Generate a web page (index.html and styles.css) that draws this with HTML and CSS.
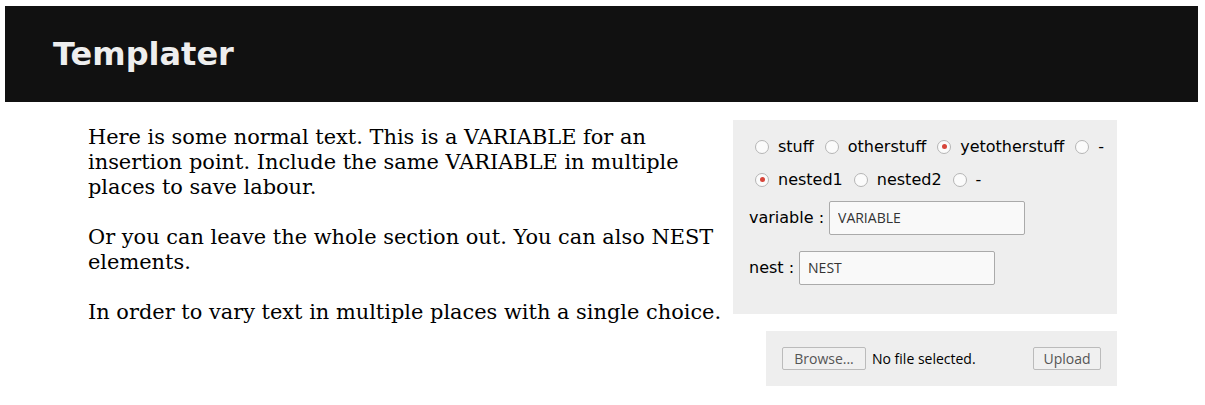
FILE: index.html
```html
<!DOCTYPE html>
<html>
<head>
<meta charset="utf-8">
<link rel="stylesheet" href="styles.css">
</head>
<body>
<header class="topbar"><h1 class="title">Templater</h1></header>
<main class="content">
  <section class="doc">
    <p>Here is some normal text. This is a VARIABLE for an insertion point. Include the same VARIABLE in multiple places to save labour.</p>
    <p>Or you can leave the whole section out. You can also NEST elements.</p>
    <p>In order to vary text in multiple places with a single choice.</p>
  </section>
  <aside class="side">
    <form class="panel">
      <div class="radio-row">
        <label class="opt"><input type="radio" name="a" class="radio"><span>stuff</span></label>
        <label class="opt"><input type="radio" name="a" class="radio"><span>otherstuff</span></label>
        <label class="opt"><input type="radio" name="a" class="radio" checked><span>yetotherstuff</span></label>
        <label class="opt"><input type="radio" name="a" class="radio"><span>-</span></label>
      </div>
      <div class="radio-row">
        <label class="opt"><input type="radio" name="b" class="radio" checked><span>nested1</span></label>
        <label class="opt"><input type="radio" name="b" class="radio"><span>nested2</span></label>
        <label class="opt"><input type="radio" name="b" class="radio"><span>-</span></label>
      </div>
      <div class="field field-first"><span class="field-label">variable :</span><input class="text-input" type="text" value="VARIABLE"></div>
      <div class="field field-second"><span class="field-label">nest :</span><input class="text-input" type="text" value="NEST"></div>
    </form>
    <div class="upload">
      <div class="file-pick"><button class="btn btn-browse" type="button">Browse...</button><span class="file-name">No file selected.</span></div>
      <button class="btn btn-upload" type="button">Upload</button>
    </div>
  </aside>
</main>
</body>
</html>
```

FILE: styles.css
```css
html, body {
  margin: 0;
  padding: 0;
  background: #fff;
}
body {
  font-family: "DejaVu Serif", serif;
}
.topbar {
  margin: 6px 7px 0 5px;
  height: 96px;
  background: #111;
  display: flex;
  align-items: center;
  padding-left: 48px;
  box-sizing: border-box;
}
.title {
  margin: 0;
  font-family: "DejaVu Sans", sans-serif;
  font-weight: bold;
  font-size: 32px;
  color: #eee;
}
.content {
  margin: 0 88px;
  padding-top: 18px;
  display: flex;
  justify-content: space-between;
}
.doc {
  flex: 1;
  padding-top: 5px;
}
.doc p {
  margin: 0 0 25px;
  font-size: 20.9px;
  line-height: 25px;
  color: #000;
  max-width: 640px;
}
.side {
  width: 384px;
  display: flex;
  flex-direction: column;
  align-items: flex-end;
}
.panel {
  width: 384px;
  height: 194px;
  box-sizing: border-box;
  background: #eee;
  padding: 10px 16px 0;
  margin: 0;
  font-family: "DejaVu Sans", sans-serif;
  font-size: 16px;
  color: #000;
}
.radio-row {
  height: 33px;
  display: flex;
  align-items: center;
}
.opt {
  display: inline-flex;
  align-items: center;
  margin-right: 5px;
}
.radio {
  appearance: none;
  -webkit-appearance: none;
  width: 14px;
  height: 14px;
  margin: 0 9px 0 6px;
  border: 1px solid #b5b5b5;
  border-radius: 50%;
  background: #fbfbfb;
  box-sizing: border-box;
  position: relative;
}
.radio:checked::after {
  content: "";
  position: absolute;
  left: 3.5px;
  top: 3.5px;
  width: 5px;
  height: 5px;
  border-radius: 50%;
  background: #d7453a;
}
.field {
  display: flex;
  align-items: center;
}
.field-first {
  margin-top: 5px;
}
.field-second {
  margin-top: 16px;
}
.field-label {
  margin-right: 5px;
  position: relative;
  top: -1px;
}
.text-input {
  width: 196px;
  height: 34px;
  box-sizing: border-box;
  border: 1px solid #aaa;
  border-radius: 2px;
  background: #f9f9f9;
  padding: 0 8px 2px;
  font-family: "Open Sans", sans-serif;
  font-size: 14px;
  color: #333;
}
.upload {
  width: 351px;
  height: 55px;
  margin-top: 17px;
  box-sizing: border-box;
  background: #eee;
  padding: 0 16px;
  display: flex;
  align-items: center;
  justify-content: space-between;
  font-family: "Open Sans", sans-serif;
  font-size: 14px;
}
.file-pick {
  display: flex;
  align-items: center;
}
.btn {
  height: 23px;
  box-sizing: border-box;
  border: 1px solid #bbb;
  border-radius: 2px;
  background: #f0f0f0;
  color: #555;
  font-family: "Open Sans", sans-serif;
  font-size: 14px;
  padding: 0 6px;
  line-height: 1;
}
.btn-browse {
  width: 84px;
}
.btn-upload {
  width: 68px;
}
.file-name {
  margin-left: 6px;
  color: #000;
}
```
